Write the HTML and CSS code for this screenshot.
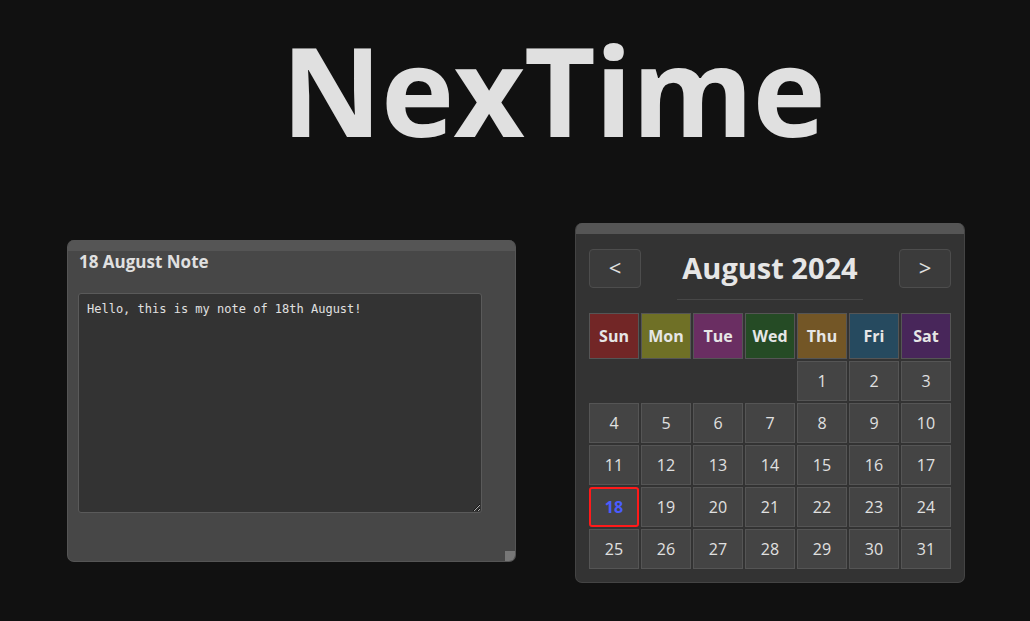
FILE: index.html
```html
<!DOCTYPE html>
<html lang="en">
<head>
<meta charset="utf-8">
<title>NexTime</title>
<link rel="stylesheet" href="styles.css">
</head>
<body>
<h1 class="title">NexTime</h1>
<main class="row">
  <section class="note">
    <div class="strip"></div>
    <h2 class="note-title">18 August Note</h2>
    <textarea class="note-text">Hello, this is my note of 18th August!</textarea>
    <div class="resizer"></div>
  </section>
  <section class="cal">
    <div class="strip"></div>
    <div class="cal-body">
      <div class="cal-head">
        <button class="nav">&lt;</button>
        <div class="month">August 2024</div>
        <button class="nav">&gt;</button>
      </div>
      <div class="grid">
        <div class="dow sun">Sun</div>
        <div class="dow mon">Mon</div>
        <div class="dow tue">Tue</div>
        <div class="dow wed">Wed</div>
        <div class="dow thu">Thu</div>
        <div class="dow fri">Fri</div>
        <div class="dow sat">Sat</div>
        <div class="empty"></div><div class="empty"></div><div class="empty"></div><div class="empty"></div>
        <div class="day">1</div><div class="day">2</div><div class="day">3</div>
        <div class="day">4</div><div class="day">5</div><div class="day">6</div><div class="day">7</div><div class="day">8</div><div class="day">9</div><div class="day">10</div>
        <div class="day">11</div><div class="day">12</div><div class="day">13</div><div class="day">14</div><div class="day">15</div><div class="day">16</div><div class="day">17</div>
        <div class="day today">18</div><div class="day">19</div><div class="day">20</div><div class="day">21</div><div class="day">22</div><div class="day">23</div><div class="day">24</div>
        <div class="day">25</div><div class="day">26</div><div class="day">27</div><div class="day">28</div><div class="day">29</div><div class="day">30</div><div class="day">31</div>
      </div>
    </div>
  </section>
</main>
</body>
</html>
```

FILE: styles.css
```css
html, body {
  margin: 0;
  padding: 0;
  background: #111111;
  color: #dddddd;
  font-family: "Open Sans", "Noto Sans", sans-serif;
  height: 100%;
}

.title {
  margin: 0;
  padding: 14px 0 0 76px;
  text-align: center;
  font-size: 124px;
  line-height: 150px;
  font-weight: 700;
  color: #e0e0e0;
  letter-spacing: -1px;
}

.row {
  display: flex;
  justify-content: center;
  align-items: flex-start;
  gap: 59px;
  margin-top: 59px;
  padding-left: 2px;
}

.strip {
  height: 11px;
  background: #555555;
}

.note {
  position: relative;
  box-sizing: border-box;
  width: 449px;
  height: 322px;
  margin-top: 17px;
  background: #474747;
  border: 1px solid #555555;
  border-top: none;
  border-radius: 7px;
  overflow: hidden;
}

.note-title {
  margin: 0;
  padding: 0 0 0 11px;
  font-size: 17px;
  line-height: 22px;
  font-weight: 700;
  color: #e0e0e0;
}

.note-text {
  display: block;
  box-sizing: border-box;
  margin: 20px 0 0 10px;
  width: 404px;
  height: 220px;
  background: #333333;
  border: 1px solid #5a5a5a;
  border-radius: 3px;
  color: #e0e0e0;
  font-family: "DejaVu Sans Mono", "Liberation Mono", monospace;
  font-size: 12px;
  line-height: 15px;
  padding: 8px 8px;
  outline: none;
}

.resizer {
  position: absolute;
  right: 0;
  bottom: 0;
  width: 10px;
  height: 10px;
  background: #777777;
}

.cal {
  box-sizing: border-box;
  width: 390px;
  height: 360px;
  background: #333333;
  border: 1px solid #444444;
  border-top: none;
  border-radius: 7px;
  overflow: hidden;
}

.cal-body {
  padding: 15px 13px 0 13px;
}

.cal-head {
  display: flex;
  align-items: flex-start;
  justify-content: space-between;
  height: 64px;
}

.nav {
  width: 52px;
  height: 39px;
  background: #3b3b3b;
  border: 1px solid #4d4d4d;
  border-radius: 4px;
  color: #e0e0e0;
  font-family: "Open Sans", sans-serif;
  font-size: 22px;
  line-height: 1;
  padding: 0 0 3px 0;
}

.month {
  width: 186px;
  height: 50px;
  border-bottom: 1px solid #474747;
  text-align: center;
  font-size: 29px;
  font-weight: 700;
  line-height: 38px;
  color: #e6e6e6;
  white-space: nowrap;
}

.grid {
  display: grid;
  grid-template-columns: repeat(7, 50px);
  grid-template-rows: 46px repeat(5, 40px);
  column-gap: 2px;
  row-gap: 2px;
}

.dow, .day {
  box-sizing: border-box;
  display: flex;
  align-items: center;
  justify-content: center;
  border: 1px solid #555555;
}

.dow {
  font-weight: 700;
  font-size: 16px;
  color: #e6e6e6;
}

.sun { background: #722626; }
.mon { background: #6f7026; }
.tue { background: #6a2e62; }
.wed { background: #254b25; }
.thu { background: #735626; }
.fri { background: #264a5f; }
.sat { background: #48265a; }

.day {
  background: #444444;
  font-size: 16px;
  color: #e0e0e0;
}

.today {
  border: 2px solid #ff1a1a;
  border-radius: 3px;
  color: #4a5cff;
  font-weight: 700;
}
```
